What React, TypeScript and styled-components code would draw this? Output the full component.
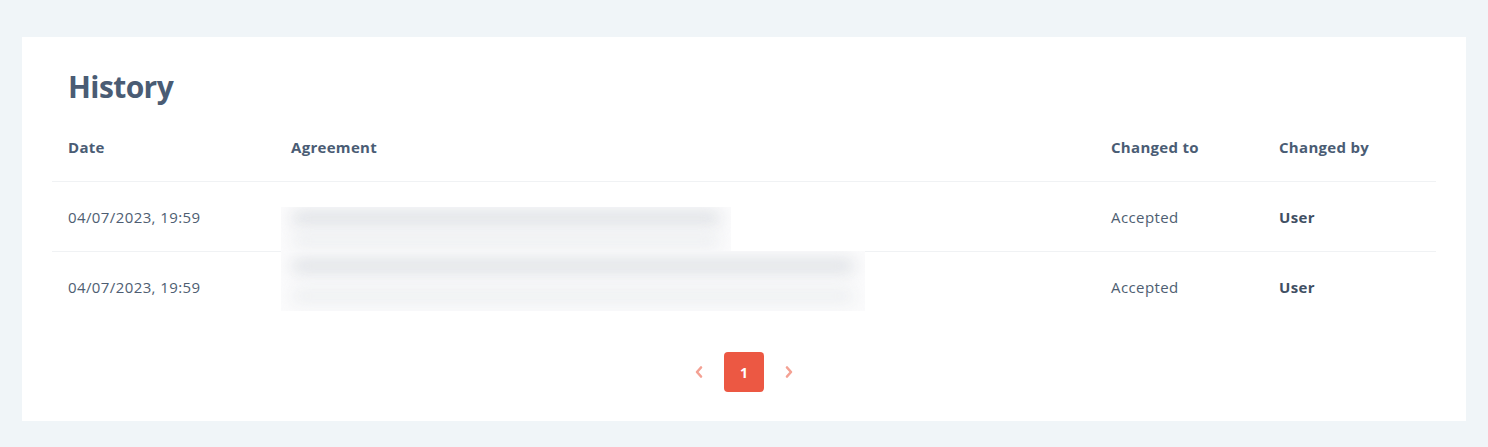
import React from "react";
import styled, {createGlobalStyle} from "styled-components";

const GlobalStyle = createGlobalStyle`
  body {
    margin: 0;
    background: #f0f5f8;
    font-family: "Open Sans", "Liberation Sans", sans-serif;
    color: #47586c;
  }
`

type Entry = {
    date: string;
    agreementWidth: number;
    status: string;
    by: string;
}

const entries: Entry[] = [
    {date: "04/07/2023, 19:59", agreementWidth: 450, status: "Accepted", by: "User"},
    {date: "04/07/2023, 19:59", agreementWidth: 584, status: "Accepted", by: "User"},
];

const ChevronLeft = () => <svg width="10" height="14" viewBox="0 0 10 14">
    <path d="M7 2.5 L3 7 L7 11.5" fill="none" stroke="currentColor" strokeWidth="2.6" strokeLinecap="round" strokeLinejoin="round"/>
</svg>

const ChevronRight = () => <svg width="10" height="14" viewBox="0 0 10 14">
    <path d="M3 2.5 L7 7 L3 11.5" fill="none" stroke="currentColor" strokeWidth="2.6" strokeLinecap="round" strokeLinejoin="round"/>
</svg>

export default function App() {
    return <>
        <GlobalStyle/>
        <Page>
            <Card>
                <Title>History</Title>
                <Table>
                    <colgroup>
                        <col style={{width: 223}}/>
                        <col/>
                        <col style={{width: 168}}/>
                        <col style={{width: 173}}/>
                    </colgroup>
                    <thead>
                    <tr>
                        <Th>Date</Th>
                        <Th>Agreement</Th>
                        <Th>Changed to</Th>
                        <Th>Changed by</Th>
                    </tr>
                    </thead>
                    <tbody>
                    {entries.map((e, i) => <tr key={i}>
                        <Td>{e.date}</Td>
                        <AgreementCell>
                            <Redacted $top={i === 0} style={{width: e.agreementWidth}}>
                                <BlurBar $dark/>
                                <BlurBar/>
                            </Redacted>
                        </AgreementCell>
                        <Td>{e.status}</Td>
                        <Td $bold>{e.by}</Td>
                    </tr>)}
                    </tbody>
                </Table>
                <Pagination>
                    <PageArrow><ChevronLeft/></PageArrow>
                    <PageButton>1</PageButton>
                    <PageArrow><ChevronRight/></PageArrow>
                </Pagination>
            </Card>
        </Page>
    </>
}

const Page = styled.div`
  padding: 37px 22px 26px;
`

const Card = styled.div`
  background: #fff;
  padding: 30px 30px 29px;
`

const Title = styled.h1`
  margin: 0 0 0 16px;
  font-size: 30px;
  line-height: 40px;
  font-weight: 700;
  color: #4a5c74;
  letter-spacing: -0.6px;
`

const Table = styled.table`
  width: 100%;
  table-layout: fixed;
  border-collapse: collapse;
  margin-top: 5px;
`

const Th = styled.th`
  text-align: left;
  font-size: 15px;
  font-weight: 700;
  color: #4a5c74;
  letter-spacing: 0.3px;
  padding: 0 16px;
  height: 69px;
  border-bottom: 1px solid #f0f2f4;
`

const Td = styled.td<{ $bold?: boolean }>`
  font-size: 15px;
  letter-spacing: 0.4px;
  font-weight: ${p => p.$bold ? 700 : 400};
  color: ${p => p.$bold ? "#3f4f63" : "#4e5e72"};
  padding: 0 16px;
  height: 69px;
  border-bottom: 1px solid #f0f2f4;

  tbody tr:last-child & {
    border-bottom: none;
  }
`

const AgreementCell = styled(Td)`
  padding: 0;
  position: relative;
`

const Redacted = styled.div<{ $top: boolean }>`
  position: absolute;
  left: 6px;
  top: ${p => p.$top ? "25px" : "-1px"};
  height: ${p => p.$top ? "45px" : "60px"};
  overflow: hidden;
  background: #fbfbfc;
  display: flex;
  flex-direction: column;
  justify-content: space-around;
  padding: 0 10px;
  box-sizing: border-box;
`

const BlurBar = styled.div<{ $dark?: boolean }>`
  height: 14px;
  border-radius: 7px;
  background: ${p => p.$dark ? "#dde0e4" : "#eceef0"};
  filter: blur(8px);
`

const Pagination = styled.div`
  display: flex;
  justify-content: center;
  align-items: center;
  gap: 20px;
  margin-top: 31px;
`

const PageArrow = styled.span`
  display: flex;
  align-items: center;
  justify-content: center;
  width: 10px;
  color: #f4a193;
`

const PageButton = styled.button`
  width: 40px;
  height: 40px;
  border: 0;
  border-radius: 4px;
  background: #ec5843;
  color: #fff;
  font-family: inherit;
  font-size: 14px;
  font-weight: 700;
  margin: 0;
  padding: 0;
`
